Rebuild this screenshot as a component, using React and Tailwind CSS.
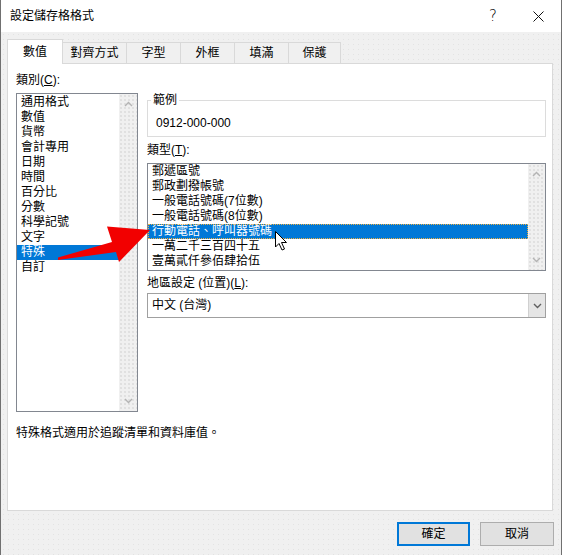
import React from 'react';

const categories = ['通用格式', '數值', '貨幣', '會計專用', '日期', '時間', '百分比', '分數', '科學記號', '文字', '特殊', '自訂'];
const types = ['郵遞區號', '郵政劃撥帳號', '一般電話號碼(7位數)', '一般電話號碼(8位數)', '行動電話、呼叫器號碼', '一萬二千三百四十五', '壹萬貳仟參佰肆拾伍'];

const tabs = [
  { label: '對齊方式', w: 'w-[64px]' },
  { label: '字型', w: 'w-[54px]' },
  { label: '外框', w: 'w-[54px]' },
  { label: '填滿', w: 'w-[54px]' },
  { label: '保護', w: 'w-[52px]' },
];

const Chevron = ({ up, color = '#b4b4b4' }) => (
  <svg width="9" height="6" viewBox="0 0 9 6">
    <path d={up ? 'M1 5 L4.5 1.5 L8 5' : 'M1 1 L4.5 4.5 L8 1'} stroke={color} strokeWidth="1.4" fill="none" />
  </svg>
);

const Scrollbar = ({ w }) => (
  <div className={`${w} h-full flex flex-col justify-between items-center py-[7px] bg-[#f0f0f0] bg-[radial-gradient(circle,#e0e0e0_0.7px,transparent_1px)] bg-[length:4px_4px]`}>
    <Chevron up />
    <Chevron />
  </div>
);

const App = () => {
  return (
    <div className="relative w-[562px] h-[555px] flex flex-col border-l border-r border-[#707070] text-[12px] leading-[15px] text-black font-['Liberation_Sans','Noto_Sans_CJK_TC',sans-serif] overflow-hidden">
      {/* Title bar */}
      <div className="h-[32px] bg-white flex items-center pl-[9px] shrink-0">
        <span>設定儲存格格式</span>
        <div className="ml-auto flex h-full">
          <div className="w-[46px] h-full flex items-center justify-center pl-[2px] text-[15px] font-['DejaVu_Sans',sans-serif] font-light">?</div>
          <div className="w-[46px] h-full flex items-center justify-center">
            <svg width="11" height="11" viewBox="0 0 11 11">
              <path d="M0.5 0.5 L10.5 10.5 M10.5 0.5 L0.5 10.5" stroke="#111" strokeWidth="1" />
            </svg>
          </div>
        </div>
      </div>

      {/* Body */}
      <div className="flex-1 flex flex-col pl-[6px] pr-[8px] pt-[7px] bg-[#f0f0f0] bg-[radial-gradient(circle,#e3e3e3_0.7px,transparent_1px)] bg-[length:5px_5px]">
        {/* Tabs */}
        <div className="flex items-end h-[25px] relative z-10 mb-[-1px]">
          <div className="w-[56px] h-[25px] bg-white border border-b-0 border-[#d9d9d9] flex items-center justify-center">數值</div>
          {tabs.map(t => (
            <div key={t.label} className={`${t.w} h-[21px] mb-[1px] bg-[#f0f0f0] border-t border-r border-[#d9d9d9] flex items-center justify-center`}>
              {t.label}
            </div>
          ))}
        </div>

        {/* Panel */}
        <div className="w-[546px] h-[448px] bg-white border border-[#d9d9d9] pl-[8px] pt-[9px] flex flex-col">
          <div className="flex gap-[9px]">
            {/* Left column */}
            <div className="w-[122px] flex flex-col">
              <div>類別(<span className="underline">C</span>):</div>
              <div className="mt-[5px] h-[319px] border border-[#828790] flex">
                <div className="flex-1 pt-[1px]">
                  {categories.map(c => (
                    <div key={c} className={`h-[15px] pl-[4px] ${c === '特殊' ? 'bg-[#0078d7] text-white' : ''}`}>{c}</div>
                  ))}
                </div>
                <Scrollbar w="w-[18px]" />
              </div>
            </div>

            {/* Right column */}
            <div className="w-[399px] flex flex-col">
              <fieldset className="mt-[20px] border border-[#dcdcdc] px-[3px] pt-[8px] pb-[5px]">
                <legend className="px-[2px]">範例</legend>
                <div className="pl-[5px]">0912-000-000</div>
              </fieldset>

              <div className="mt-[6px]">類型(<span className="underline">T</span>):</div>
              <div className="mt-[5px] h-[108px] border border-[#828790] flex">
                <div className="flex-1">
                  {types.map((t, i) => (
                    <div
                      key={t}
                      className={`h-[15px] pl-[4px] ${i === 4 ? 'bg-[#0078d7] text-white outline-1 outline-dotted outline-[#f0b040] -outline-offset-1' : ''}`}
                    >
                      {t}
                    </div>
                  ))}
                </div>
                <Scrollbar w="w-[17px]" />
              </div>

              <div className="mt-[5px]">地區設定 (位置)(<span className="underline">L</span>):</div>
              <div className="mt-[2px] h-[25px] border border-[#a0a0a0] flex items-center">
                <div className="flex-1 pl-[4px]">中文 (台灣)</div>
                <div className="w-[17px] h-full bg-[#e5e5e5] border-l border-[#d0d0d0] flex items-center justify-center">
                  <Chevron color="#606060" />
                </div>
              </div>
            </div>
          </div>

          <div className="mt-[14px]">特殊格式適用於追蹤清單和資料庫值。</div>
        </div>

        {/* Buttons */}
        <div className="mt-[11px] flex justify-end gap-[10px] mr-[-1px]">
          <button className="w-[73px] h-[24px] bg-[#e1e1e1] border-2 border-[#0078d7] flex items-center justify-center">確定</button>
          <button className="w-[74px] h-[24px] bg-[#e1e1e1] border border-[#adadad] flex items-center justify-center">取消</button>
        </div>
      </div>

      {/* Annotation overlay: red arrow + mouse cursor */}
      <svg className="absolute left-0 top-0 pointer-events-none" width="562" height="555" viewBox="0 0 562 555">
        <polygon points="57,257.5 111,242 106,226.5 149,230 118,262 115,252 57,260" fill="#f20000" />
        <path
          d="M274.5 231.5 L274.5 247 L278 243.5 L281 250 L283.5 249 L280.5 242.5 L285.5 242.5 Z"
          fill="#fff"
          stroke="#000"
          strokeWidth="1"
          strokeLinejoin="round"
        />
      </svg>
    </div>
  );
};

export default App;
